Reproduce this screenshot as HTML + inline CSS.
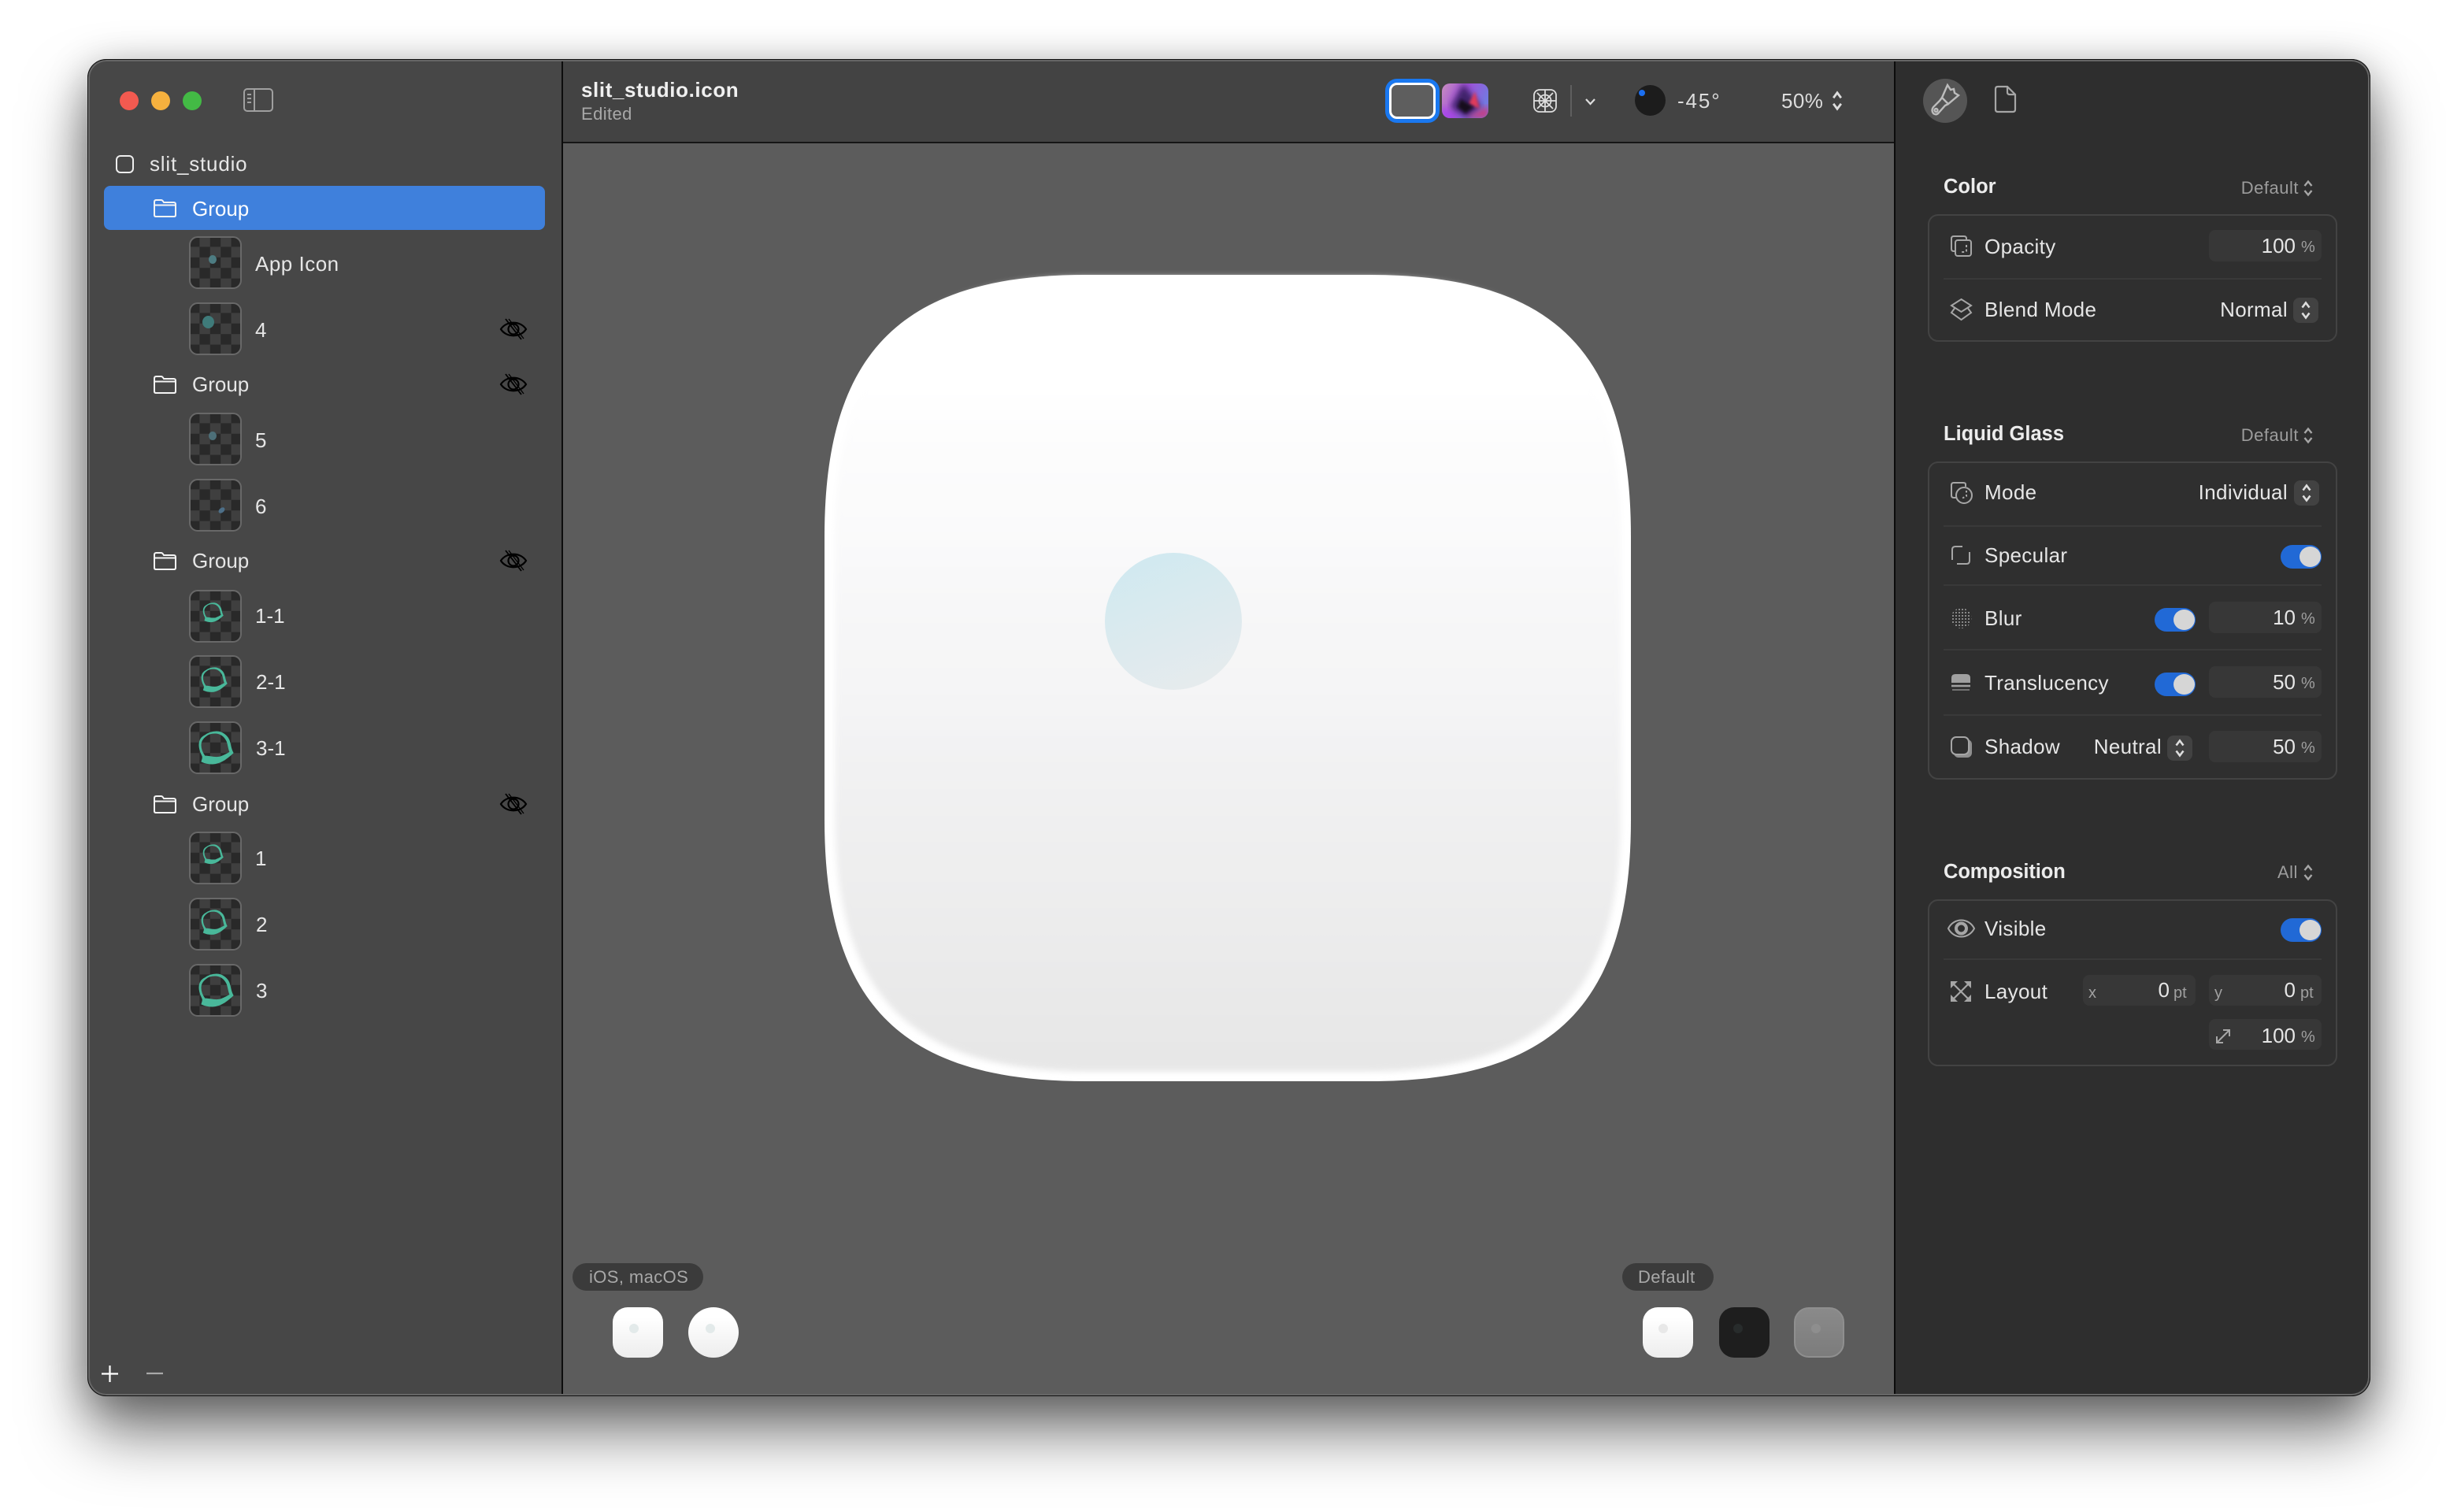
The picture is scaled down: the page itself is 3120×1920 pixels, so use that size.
<!DOCTYPE html>
<html><head><meta charset="utf-8"><title>slit_studio.icon</title>
<style>
html,body{margin:0;padding:0;background:#fff}
body{position:relative;width:3120px;height:1920px;overflow:hidden;font-family:"Liberation Sans",sans-serif}
.a{position:absolute}
svg{position:absolute;overflow:visible;fill:none}
#shadow{left:111px;top:75px;width:2899px;height:1698px;border-radius:24px;box-shadow:0 46px 80px rgba(0,0,0,.52),0 10px 50px rgba(0,0,0,.28)}
#win{left:111px;top:75px;width:2899px;height:1698px;border-radius:24px;overflow:hidden;background:#474747}
#win .p{position:absolute}
#edge{left:111px;top:75px;width:2899px;height:1698px;box-sizing:border-box;border-radius:24px;border:1.5px solid #111;box-shadow:inset 0 0 0 2px #666}
.t{position:absolute;white-space:nowrap;height:40px;line-height:40px;font-size:26px;color:#e6e6e6}
.l{letter-spacing:.35px}
.g{font-size:22px;color:#9c9c9c;letter-spacing:.5px}
.b{font-weight:bold;color:#ececec;font-size:25.5px}
.u{position:absolute;white-space:nowrap;height:40px;line-height:40px;font-size:20px;color:#a0a0a0}
.th{position:absolute;left:240px;width:67px;height:67px;box-sizing:border-box;border:2px solid #686868;border-radius:11px;background:conic-gradient(#3f3f3f 25%,#292929 0 50%,#3f3f3f 0 75%,#292929 0);background-size:26.8px 26.8px;background-origin:border-box}
.card{position:absolute;left:2448px;width:520px;box-sizing:border-box;border:2px solid #434343;border-radius:13px;background:#2f2f2f}
.dv{position:absolute;left:2468px;width:480px;height:2px;background:#393939}
.f{position:absolute;background:#373737;border-radius:8px;height:40px}
.st{position:absolute;width:32px;height:32px;background:#424242;border-radius:8px}
.tg{position:absolute;width:52px;height:30px;border-radius:15px;background:#2169d6}
.tg:after{content:"";position:absolute;right:1px;top:2px;width:27px;height:26px;border-radius:50%;background:#d6d6d6}
.pill{position:absolute;height:35px;border-radius:18px;background:#3b3b3b;top:1604px}
.pill span{position:absolute;top:0;line-height:35px;font-size:22px;color:#a8a8a8;white-space:nowrap;letter-spacing:.4px}
.pv{position:absolute;top:1660px;width:64px;height:64px;border-radius:19px;background:linear-gradient(#fff 20%,#ededed)}
.pv i{position:absolute;left:21px;top:21px;width:12px;height:12px;border-radius:50%;background:#e3eaea}
.ic{stroke:#a6a6a6;stroke-width:2}
</style></head>
<body>
<svg width="0" height="0" style="position:absolute">
<defs>
<symbol id="eo" viewBox="0 0 34 28" overflow="visible"><path d="M1,14C8,3 26,3 33,14C26,25 8,25 1,14Z" fill="none" stroke="#000" stroke-width="2.2"/><circle cx="17" cy="14" r="6.5" fill="none" stroke="#000" stroke-width="2.2"/><path d="M7,1L27,27" stroke="#000" stroke-width="1.8"/><path d="M11,1L30,26" stroke="#000" stroke-width="1.4"/></symbol>
<symbol id="fo" viewBox="0 0 29 23" overflow="visible"><path d="M1,20V3.5Q1,1 3.5,1H9.5Q11,1 12,2.5L13,4H25.5Q28,4 28,6.5V20Q28,22 26,22H3Q1,22 1,20ZM1,7.5H28" fill="none" stroke="#f4f4f4" stroke-width="2"/></symbol>
<symbol id="ud" viewBox="0 0 12 26" overflow="visible"><path d="M1.5,9.5L6,3.5L10.5,9.5M1.5,16.5L6,22.5L10.5,16.5" fill="none" stroke="#dedede" stroke-width="2.6"/></symbol>
<symbol id="ud2" viewBox="0 0 12 26" overflow="visible"><path d="M1.5,10L6,4.5L10.5,10M1.5,16L6,21.5L10.5,16" fill="none" stroke="#a6a6a6" stroke-width="2.4"/></symbol>
<symbol id="ri" viewBox="0 0 44 42" overflow="visible"><path fill-rule="evenodd" fill="#49b89a" stroke="#49b89a" stroke-width="1" d="M22,0C30,0 36,6 38,11C40,17 40,22 43,27C39,31 36,33 32,36C27,39 22,41 17,41C12,41 7,40 3,38C4,35 5,33 4,31C2,27 0,22 0,17C0,11 3,7 7,5C11,2 16,0 22,0ZM20,2C15,2 11,3 8,6C4,9 2,13 2,17C2,22 4,27 7,31C13,31 20,34 27,32C32,30 36,28 39,26C37,22 37,17 35,12C32,6 27,2 20,2Z"/></symbol>
</defs>
</svg>

<div id="shadow" class="a"></div>
<div id="win" class="a">
  <div class="p" style="left:0;top:0;width:602px;height:1698px;background:#474747"></div>
  <div class="p" style="left:602px;top:0;width:2px;height:1698px;background:#0c0c0c"></div>
  <div class="p" style="left:604px;top:0;width:1690px;height:105px;background:#434343"></div>
  <div class="p" style="left:604px;top:105px;width:1690px;height:2px;background:#161616"></div>
  <div class="p" style="left:604px;top:107px;width:1690px;height:1591px;background:#5c5c5c"></div>
  <div class="p" style="left:2294px;top:0;width:2px;height:1698px;background:#0c0c0c"></div>
  <div class="p" style="left:2296px;top:0;width:603px;height:1698px;background:#2e2e2e"></div>
</div>
<div id="edge" class="a"></div>

<!-- traffic lights -->
<div class="a" style="left:152px;top:116px;width:24px;height:24px;border-radius:50%;background:#f25a50"></div>
<div class="a" style="left:192px;top:116px;width:24px;height:24px;border-radius:50%;background:#f6b13e"></div>
<div class="a" style="left:232px;top:116px;width:24px;height:24px;border-radius:50%;background:#43ba45"></div>
<svg style="left:309px;top:112px" width="38" height="30"><rect x="1" y="1" width="36" height="28" rx="4" stroke="#a0a0a0" stroke-width="2"/><path d="M14,1V29" stroke="#a0a0a0" stroke-width="2"/><path d="M5,8H10M5,13H10M5,18H10" stroke="#a0a0a0" stroke-width="2"/></svg>

<!-- sidebar -->
<svg style="left:147px;top:197px" width="23" height="23"><rect x="1" y="1" width="21" height="21" rx="5" stroke="#eee" stroke-width="2"/></svg>
<div class="t" style="left:190px;top:188px;letter-spacing:.8px">slit_studio</div>
<div class="a" style="left:132px;top:236px;width:560px;height:56px;border-radius:8px;background:#3f80dc"></div>
<svg style="left:195px;top:253px" width="29" height="23"><use href="#fo"/></svg>
<div class="t" style="left:244px;top:245px;color:#fff">Group</div>

<div class="th" style="top:300px"><div class="a" style="left:23px;top:22px;width:10px;height:11px;border-radius:50%;background:#4d7c82"></div></div>
<div class="t" style="left:324px;top:315px;letter-spacing:.5px">App Icon</div>
<div class="th" style="top:384px"><div class="a" style="left:15px;top:15px;width:15px;height:16px;border-radius:50%;background:#3f7b7a"></div></div>
<div class="t" style="left:324px;top:399px">4</div>
<svg style="left:635px;top:404px" width="34" height="28"><use href="#eo"/></svg>

<svg style="left:195px;top:477px" width="29" height="23"><use href="#fo"/></svg>
<div class="t" style="left:244px;top:468px">Group</div>
<svg style="left:635px;top:474px" width="34" height="28"><use href="#eo"/></svg>
<div class="th" style="top:524px"><div class="a" style="left:23px;top:22px;width:10px;height:11px;border-radius:50%;background:#4d6f78"></div></div>
<div class="t" style="left:324px;top:539px">5</div>
<div class="th" style="top:608px"><div class="a" style="left:35px;top:35px;width:9px;height:6px;border-radius:50%;transform:rotate(-40deg);background:#4d6f88"></div></div>
<div class="t" style="left:324px;top:623px">6</div>

<svg style="left:195px;top:701px" width="29" height="23"><use href="#fo"/></svg>
<div class="t" style="left:244px;top:692px">Group</div>
<svg style="left:635px;top:698px" width="34" height="28"><use href="#eo"/></svg>
<div class="th" style="top:749px"></div>
<svg style="left:258px;top:765px" width="26" height="26"><use href="#ri"/></svg>
<div class="t" style="left:324px;top:762px">1-1</div>
<div class="th" style="top:832px"></div>
<svg style="left:256px;top:847px" width="33" height="33"><use href="#ri"/></svg>
<div class="t" style="left:325px;top:846px">2-1</div>
<div class="th" style="top:916px"></div>
<svg style="left:253px;top:929px" width="44" height="42"><use href="#ri"/></svg>
<div class="t" style="left:325px;top:930px">3-1</div>

<svg style="left:195px;top:1010px" width="29" height="23"><use href="#fo"/></svg>
<div class="t" style="left:244px;top:1001px">Group</div>
<svg style="left:635px;top:1007px" width="34" height="28"><use href="#eo"/></svg>
<div class="th" style="top:1056px"></div>
<svg style="left:258px;top:1072px" width="26" height="26"><use href="#ri"/></svg>
<div class="t" style="left:324px;top:1070px">1</div>
<div class="th" style="top:1140px"></div>
<svg style="left:256px;top:1155px" width="33" height="33"><use href="#ri"/></svg>
<div class="t" style="left:325px;top:1154px">2</div>
<div class="th" style="top:1224px"></div>
<svg style="left:253px;top:1237px" width="44" height="42"><use href="#ri"/></svg>
<div class="t" style="left:325px;top:1238px">3</div>

<svg style="left:129px;top:1734px" width="21" height="21"><path d="M0,10.5H21M10.5,0V21" stroke="#fff" stroke-width="2.2"/></svg>
<svg style="left:186px;top:1734px" width="21" height="21"><path d="M0,10H21" stroke="#a8a8a8" stroke-width="2.2"/></svg>

<!-- toolbar -->
<div class="t b" style="left:738px;top:94px;font-size:26px;color:#f0f0f0;letter-spacing:.6px">slit_studio.icon</div>
<div class="t" style="left:738px;top:125px;font-size:22px;color:#a8a8a8;letter-spacing:.4px">Edited</div>
<div class="a" style="left:1759px;top:100px;width:69px;height:56px;box-sizing:border-box;border-radius:15px;border:5px solid #1a78f0"></div>
<div class="a" style="left:1764px;top:105px;width:59px;height:46px;box-sizing:border-box;border-radius:10px;background:#5e5e5e;border:3px solid #fff"></div>
<svg style="left:1831px;top:106px" width="59" height="44" viewBox="0 0 59 44">
<defs>
<linearGradient id="sw" x1="0" y1="0" x2="1" y2=".35"><stop offset="0" stop-color="#c98ec0"/><stop offset=".5" stop-color="#a050d8"/><stop offset="1" stop-color="#7478e0"/></linearGradient>
<clipPath id="swc"><rect width="59" height="44" rx="10"/></clipPath>
<filter id="b4"><feGaussianBlur stdDeviation="4"/></filter>
<filter id="b2"><feGaussianBlur stdDeviation="1.8"/></filter>
</defs>
<g clip-path="url(#swc)">
<rect width="59" height="44" fill="url(#sw)"/>
<path d="M0,44V28L18,44Z" fill="#a83ff0" filter="url(#b4)"/>
<path d="M27,0L11,30L32,44L50,30Z" fill="#40246a" filter="url(#b4)"/>
<path d="M30,44H59V28Z" fill="#c93a80" filter="url(#b4)"/>
<path d="M42,10L48,32L34,26Z" fill="#df3b5c" filter="url(#b2)"/>
<path d="M24,20L40,30L30,38L20,30Z" fill="#150a1a" filter="url(#b2)"/>
</g></svg>
<svg style="left:1947px;top:113px" width="30" height="30" stroke="#ddd" stroke-width="1.8"><rect x="1" y="1" width="28" height="28" rx="7"/><circle cx="15" cy="15" r="7.5"/><path d="M15,1V29M1,15H29M5,5L25,25M25,5L5,25"/></svg>
<div class="a" style="left:1994px;top:108px;width:2px;height:40px;background:#5f5f5f"></div>
<svg style="left:2012px;top:124px" width="15" height="10"><path d="M2,2L7.5,8L13,2" stroke="#ddd" stroke-width="2.2"/></svg>
<div class="a" style="left:2076px;top:108px;width:39px;height:39px;border-radius:50%;background:#1c1c1c"></div>
<div class="a" style="left:2081px;top:114px;width:8px;height:8px;border-radius:50%;background:#1b6ff0"></div>
<div class="t" style="left:2130px;top:108px;color:#dcdcdc;letter-spacing:1.9px">-45°</div>
<div class="t" style="left:2262px;top:108px;color:#dcdcdc;letter-spacing:.4px">50%</div>
<svg style="left:2326px;top:114px" width="14" height="28"><use href="#ud"/></svg>

<!-- icon canvas -->
<svg style="left:1046px;top:349px" width="1026" height="1024" viewBox="0 0 1024 1024">
<defs>
<linearGradient id="bg" x1="0" y1="0" x2="0" y2="1"><stop offset=".12" stop-color="#fff"/><stop offset=".5" stop-color="#f5f5f6"/><stop offset=".97" stop-color="#e7e7e7"/></linearGradient>
<linearGradient id="cc" x1=".25" y1="0" x2=".65" y2="1"><stop offset="0" stop-color="#d0e9f0"/><stop offset="1" stop-color="#e6ebed"/></linearGradient>
<filter id="sf" x="-5%" y="-5%" width="110%" height="110%"><feGaussianBlur stdDeviation="4"/></filter>
</defs>
<path fill="#fff" d="M332,0H692C926,0 1024,98 1024,332V692C1024,926 926,1024 692,1024H332C98,1024 0,926 0,692V332C0,98 98,0 332,0Z"/>
<path transform="translate(13,3) scale(.975,.985)" fill="url(#bg)" filter="url(#sf)" d="M332,0H692C926,0 1024,98 1024,332V692C1024,926 926,1024 692,1024H332C98,1024 0,926 0,692V332C0,98 98,0 332,0Z"/>
<circle cx="443" cy="440" r="87" fill="url(#cc)"/>
</svg>

<!-- bottom previews -->
<div class="pill" style="left:727px;width:166px"><span style="left:21px">iOS, macOS</span></div>
<div class="pv" style="left:778px"><i></i></div>
<div class="pv" style="left:874px;border-radius:50%"><i style="left:22px"></i></div>
<div class="pill" style="left:2060px;width:116px"><span style="left:20px">Default</span></div>
<div class="pv" style="left:2086px"><i style="left:20px;background:#e8e8e8"></i></div>
<div class="pv" style="left:2183px;background:#1e1e1e"><i style="background:#282c2c;left:18px"></i></div>
<div class="pv" style="left:2278px;background:linear-gradient(#8a8a8a,#7c7c7c);box-sizing:border-box;border:2px solid #8f8f8f"><i style="background:#8e8e8e;left:20px;top:19px"></i></div>

<!-- inspector -->
<div class="a" style="left:2442px;top:100px;width:56px;height:56px;border-radius:50%;background:#555"></div>
<svg style="left:2452px;top:107px" width="36" height="40" stroke="#bdbdbd" stroke-width="2.4"><path d="M21,1L14,17L22,25L35,14L30,11L29,6L25,7Z"/><path d="M14,17L11,21L3,29Q0,33 3,37Q7,40 10,36L18,27L22,25"/><circle cx="6.5" cy="33" r="2"/></svg>
<svg style="left:2533px;top:109px" width="27" height="34" stroke="#a6a6a6" stroke-width="2.2"><path d="M4,1H16L26,11V30Q26,33 23,33H4Q1,33 1,30V4Q1,1 4,1ZM16,1V8Q16,11 19,11H26"/></svg>

<div class="t b" style="left:2468px;top:217px">Color</div>
<div class="t g" style="right:201px;top:219px">Default</div>
<svg style="left:2925px;top:226px" width="12" height="26"><use href="#ud2"/></svg>
<div class="card" style="top:272px;height:162px"></div>
<svg style="left:2477px;top:299px" width="27" height="27" class="ic"><path d="M6,20H4Q1,20 1,17V4Q1,1 4,1H17Q20,1 20,4V6"/><rect x="6" y="6" width="20" height="20" rx="3"/><path d="M20,12V19Q20,21 18,21H12" stroke-dasharray="3 2.5"/></svg>
<div class="t l" style="left:2520px;top:293px">Opacity</div>
<div class="f" style="left:2805px;top:292px;width:143px"></div>
<div class="t" style="right:205px;top:292px">100</div>
<div class="u" style="left:2922px;top:294px">%</div>
<div class="dv" style="top:353px"></div>
<svg style="left:2477px;top:379px" width="27" height="28" class="ic"><path d="M13.5,1L26,9L13.5,17L1,9Z"/><path d="M5,12.5L1,18L13.5,27L26,18L22,12.5"/></svg>
<div class="t l" style="left:2520px;top:373px">Blend Mode</div>
<div class="t l" style="right:215px;top:373px">Normal</div>
<div class="st" style="left:2912px;top:378px"></div>
<svg style="left:2922px;top:381px" width="12" height="26"><use href="#ud"/></svg>

<div class="t b" style="left:2468px;top:531px">Liquid Glass</div>
<div class="t g" style="right:201px;top:533px">Default</div>
<svg style="left:2925px;top:540px" width="12" height="26"><use href="#ud2"/></svg>
<div class="card" style="top:586px;height:404px"></div>
<svg style="left:2477px;top:612px" width="28" height="28" class="ic"><path d="M7,20H4Q1,20 1,17V4Q1,1 4,1H16Q19,1 19,3V6"/><circle cx="17" cy="17" r="10"/><path d="M20,11V18L14,21" stroke-dasharray="2.5 2.5"/></svg>
<div class="t l" style="left:2520px;top:605px">Mode</div>
<div class="t l" style="right:215px;top:605px">Individual</div>
<div class="st" style="left:2913px;top:610px"></div>
<svg style="left:2923px;top:613px" width="12" height="26"><use href="#ud"/></svg>
<div class="dv" style="top:667px"></div>
<svg style="left:2478px;top:693px" width="24" height="24" class="ic"><path d="M1,18V5Q1,1 5,1H14M23,8V19Q23,23 19,23H7" /></svg>
<div class="t l" style="left:2520px;top:685px">Specular</div>
<div class="tg" style="left:2896px;top:692px"></div>
<div class="dv" style="top:742px"></div>
<svg style="left:2478px;top:772px" width="25" height="26"><defs><pattern id="dp" width="4" height="4" patternUnits="userSpaceOnUse"><circle cx="2" cy="2" r="1" fill="#a4a4a4"/></pattern></defs><circle cx="12.5" cy="13" r="13" fill="url(#dp)"/></svg>
<div class="t l" style="left:2520px;top:765px">Blur</div>
<div class="tg" style="left:2736px;top:772px"></div>
<div class="f" style="left:2805px;top:764px;width:143px"></div>
<div class="t" style="right:205px;top:764px">10</div>
<div class="u" style="left:2922px;top:766px">%</div>
<div class="dv" style="top:824px"></div>
<svg style="left:2478px;top:855px" width="24" height="24"><path d="M0,12V6Q0,1 5,1H19Q24,1 24,6V12Z" fill="#a0a0a0"/><path d="M0,16H24" stroke="#a0a0a0" stroke-width="2.5"/><path d="M1,21H23" stroke="#8a8a8a" stroke-width="1.5"/></svg>
<div class="t l" style="left:2520px;top:847px">Translucency</div>
<div class="tg" style="left:2736px;top:854px"></div>
<div class="f" style="left:2805px;top:846px;width:143px"></div>
<div class="t" style="right:205px;top:846px">50</div>
<div class="u" style="left:2922px;top:848px">%</div>
<div class="dv" style="top:907px"></div>
<svg style="left:2477px;top:935px" width="27" height="27"><rect x="4" y="4" width="23" height="23" rx="6" fill="#8f8f8f"/><rect x="1" y="1" width="22" height="22" rx="6" fill="#2f2f2f" stroke="#a6a6a6" stroke-width="2"/></svg>
<div class="t l" style="left:2520px;top:928px">Shadow</div>
<div class="t l" style="right:375px;top:928px">Neutral</div>
<div class="st" style="left:2752px;top:934px"></div>
<svg style="left:2762px;top:937px" width="12" height="26"><use href="#ud"/></svg>
<div class="f" style="left:2805px;top:928px;width:143px"></div>
<div class="t" style="right:205px;top:928px">50</div>
<div class="u" style="left:2922px;top:930px">%</div>

<div class="t b" style="left:2468px;top:1087px;letter-spacing:-.1px">Composition</div>
<div class="t g" style="left:2892px;top:1088px">All</div>
<svg style="left:2925px;top:1095px" width="12" height="26"><use href="#ud2"/></svg>
<div class="card" style="top:1142px;height:212px"></div>
<svg style="left:2473px;top:1167px" width="35" height="24" class="ic"><path d="M1,12C8,-2 27,-2 34,12C27,26 8,26 1,12Z"/><circle cx="17.5" cy="12" r="6.5" stroke-width="4"/></svg>
<div class="t l" style="left:2520px;top:1159px">Visible</div>
<div class="tg" style="left:2896px;top:1166px"></div>
<div class="dv" style="top:1217px"></div>
<svg style="left:2477px;top:1246px" width="26" height="26"><path d="M3,3L23,23M23,3L3,23" stroke="#a6a6a6" stroke-width="2.2"/><path d="M0,0H9L0,9ZM26,0H17L26,9ZM0,26H9L0,17ZM26,26H17L26,17Z" fill="#a6a6a6" stroke="none"/></svg>
<div class="t l" style="left:2520px;top:1239px">Layout</div>
<div class="f" style="left:2645px;top:1238px;width:143px;height:39px"></div>
<div class="u" style="left:2652px;top:1241px">x</div>
<div class="t" style="right:365px;top:1237px">0</div>
<div class="u" style="left:2760px;top:1241px">pt</div>
<div class="f" style="left:2805px;top:1238px;width:143px;height:39px"></div>
<div class="u" style="left:2812px;top:1241px">y</div>
<div class="t" style="right:205px;top:1237px">0</div>
<div class="u" style="left:2921px;top:1241px">pt</div>
<div class="f" style="left:2805px;top:1294px;width:143px;height:39px"></div>
<svg style="left:2813px;top:1306px" width="20" height="20" stroke="#a6a6a6" stroke-width="2"><path d="M2,18L18,2M10,2H18V10M2,10V18H10"/></svg>
<div class="t" style="right:205px;top:1295px">100</div>
<div class="u" style="left:2922px;top:1297px">%</div>
</body></html>
